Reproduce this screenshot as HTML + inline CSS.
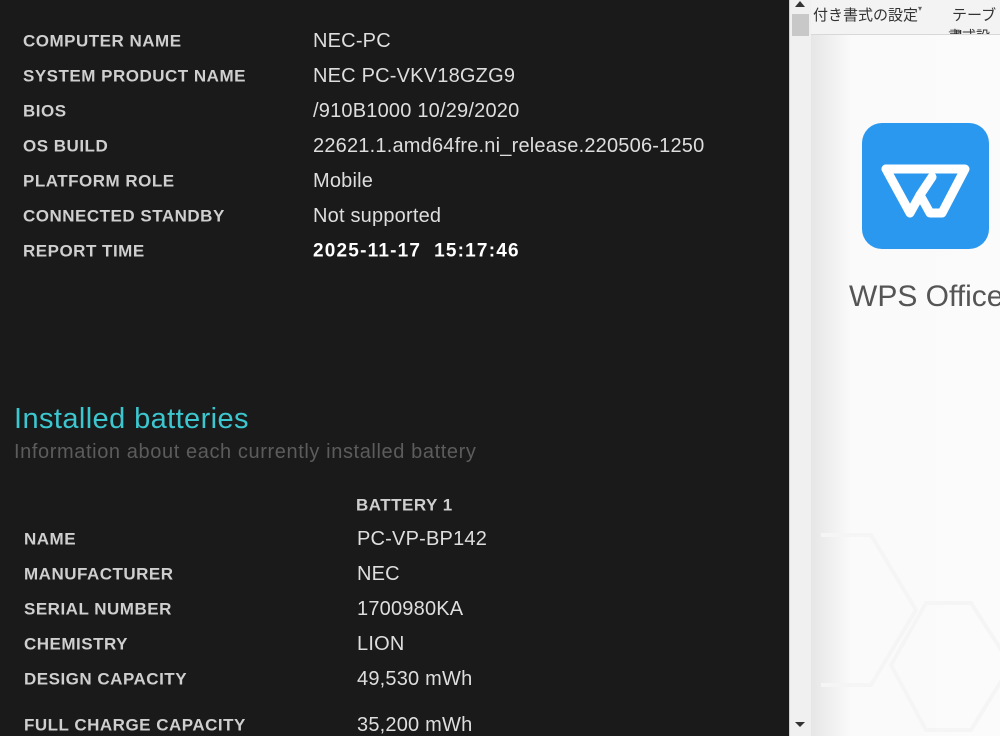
<!DOCTYPE html>
<html><head><meta charset="utf-8"><style>
body{margin:0;width:1000px;height:736px;overflow:hidden;background:#1a1a1a;font-family:"Liberation Sans","Noto Sans CJK JP",sans-serif;position:relative}
.l,.v,.h{position:absolute;white-space:nowrap;line-height:1}
.l{font-weight:bold;font-size:17px;color:#cfcfcf;letter-spacing:0.5px;transform:translateY(-50%)}
.v{font-size:20px;color:#dedede;letter-spacing:0.2px;transform:translateY(-50%)}
#sb{position:absolute;left:789px;top:0;width:22px;height:736px;background:#f0f0f0;border-left:1px solid #d0d0d0;box-sizing:border-box}
#rp{position:absolute;left:811px;top:0;width:189px;height:736px;background:linear-gradient(90deg,#e6e6e6,#fafafa 40px,#fbfbfb)}
#tb{position:absolute;left:811px;top:0;width:189px;height:34px;background:#f3f3f3;border-bottom:1px solid #d8d8d8;font-size:14px;color:#333;overflow:hidden}
</style></head><body>
<div class="l" style="left:23px;top:41px">COMPUTER NAME</div><div class="v" style="left:313px;top:41px">NEC-PC</div>
<div class="l" style="left:23px;top:76px">SYSTEM PRODUCT NAME</div><div class="v" style="left:313px;top:76px">NEC PC-VKV18GZG9</div>
<div class="l" style="left:23px;top:111px">BIOS</div><div class="v" style="left:313px;top:111px">/910B1000 10/29/2020</div>
<div class="l" style="left:23px;top:146px">OS BUILD</div><div class="v" style="left:313px;top:146px">22621.1.amd64fre.ni_release.220506-1250</div>
<div class="l" style="left:23px;top:181px">PLATFORM ROLE</div><div class="v" style="left:313px;top:181px">Mobile</div>
<div class="l" style="left:23px;top:216px">CONNECTED STANDBY</div><div class="v" style="left:313px;top:216px">Not supported</div>
<div class="l" style="left:23px;top:251px">REPORT TIME</div><div class="v" style="left:313px;top:251px;color:#fff;font-weight:bold;font-size:19px;letter-spacing:1.2px">2025-11-17&nbsp; 15:17:46</div>

<div class="h" style="left:14px;top:405px;font-size:29px;color:#3cc6cf;letter-spacing:0.4px">Installed batteries</div>
<div class="h" style="left:14px;top:442px;font-size:20px;color:#5c5c5c;letter-spacing:0.6px">Information about each currently installed battery</div>
<div class="l" style="left:356px;top:505px">BATTERY 1</div>
<div class="l" style="left:24px;top:539px">NAME</div><div class="v" style="left:357px;top:539px">PC-VP-BP142</div>
<div class="l" style="left:24px;top:574px">MANUFACTURER</div><div class="v" style="left:357px;top:574px">NEC</div>
<div class="l" style="left:24px;top:609px">SERIAL NUMBER</div><div class="v" style="left:357px;top:609px">1700980KA</div>
<div class="l" style="left:24px;top:644px">CHEMISTRY</div><div class="v" style="left:357px;top:644px">LION</div>
<div class="l" style="left:24px;top:679px">DESIGN CAPACITY</div><div class="v" style="left:357px;top:679px">49,530 mWh</div>
<div class="l" style="left:24px;top:725px">FULL CHARGE CAPACITY</div><div class="v" style="left:357px;top:725px">35,200 mWh</div>

<div id="sb">
<div style="position:absolute;left:5px;top:1px;width:0;height:0;border-left:5px solid transparent;border-right:5px solid transparent;border-bottom:6px solid #333"></div>
<div style="position:absolute;left:2px;top:14px;width:17px;height:22px;background:#c8c8c8"></div>
<div style="position:absolute;left:5px;top:722px;width:0;height:0;border-left:5px solid transparent;border-right:5px solid transparent;border-top:5px solid #333"></div>
</div>
<div id="rp">
<svg width="189" height="736" style="position:absolute;left:0;top:0">
<g fill="none" stroke="#f5f5f5" stroke-width="4">
<path d="M10 535 L60 535 L105 610 L60 685 L10 685"/>
<path d="M115 603 L160 603 L200 665 L160 730 L115 730 L80 665 Z"/>
</g>
</svg>
</div>
<div id="tb"><span style="position:absolute;left:2px;top:4px;font-size:15px">付き書式の設定<span style="font-size:8px;vertical-align:top;color:#666">▾</span></span><span style="position:absolute;left:141px;top:4px;font-size:15px">テーブル</span><span style="position:absolute;left:137px;top:26px;font-size:14px">書式設定</span></div>
<div style="position:absolute;left:862px;top:123px;width:127px;height:126px;border-radius:20px;background:#2b98f0">
<svg width="127" height="126" viewBox="0 0 127 126"><path d="M24 46 L103 46 L80 90 L68 90 L58 72 L70 54" fill="none" stroke="#fff" stroke-width="9" stroke-linejoin="round" stroke-linecap="round"/><path d="M24 46 L48 90 L58 72" fill="none" stroke="#fff" stroke-width="9" stroke-linejoin="round" stroke-linecap="round"/></svg>
</div>
<div class="h" style="left:849px;top:282px;font-size:30px;color:#555">WPS Office</div>
</body></html>
